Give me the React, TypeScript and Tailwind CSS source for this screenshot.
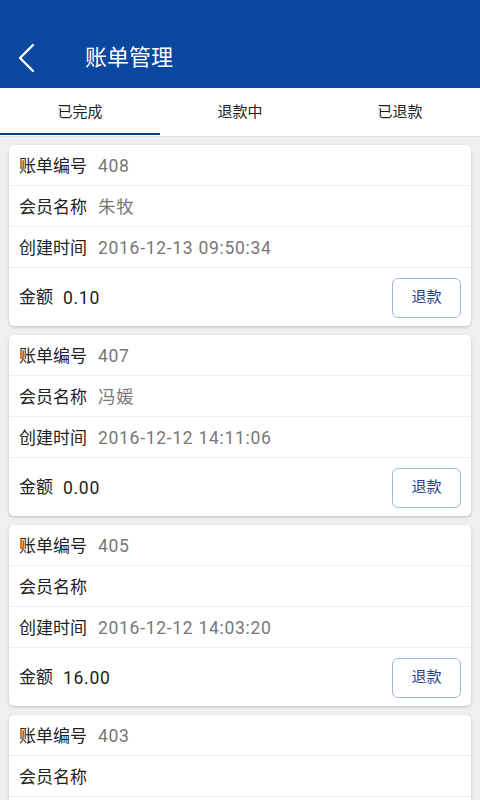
import React, { useState } from 'react';

const font = { fontFamily: '"Roboto", "Noto Sans CJK SC", sans-serif' };

interface Bill {
  id: string;
  member: string;
  created: string;
  amount: string;
}

const bills: Bill[] = [
  { id: '408', member: '朱牧', created: '2016-12-13 09:50:34', amount: '0.10' },
  { id: '407', member: '冯媛', created: '2016-12-12 14:11:06', amount: '0.00' },
  { id: '405', member: '', created: '2016-12-12 14:03:20', amount: '16.00' },
  { id: '403', member: '', created: '2016-12-12 13:58:41', amount: '8.00' },
];

const tabs = ['已完成', '退款中', '已退款'];

function Row({ label, value }: { label: string; value: string }) {
  return (
    <div className="flex-shrink-0 flex items-center h-[41px] pt-[3px] px-[10px] border-b border-[#eeeeee]">
      <span className="text-[17px] text-[#222222]">{label}</span>
      <span className="ml-[11px] text-[17.5px] tracking-[0.7px] text-[#777777]">{value}</span>
    </div>
  );
}

function BillCard({ bill }: { bill: Bill }) {
  return (
    <div className="flex-shrink-0 bg-white rounded-[5px] shadow-[0_1px_3px_rgba(0,0,0,0.2)] flex flex-col">
      <Row label="账单编号" value={bill.id} />
      <Row label="会员名称" value={bill.member} />
      <Row label="创建时间" value={bill.created} />
      <div className="flex items-center justify-between h-[58px] pt-[1px] px-[10px]">
        <div className="flex items-center pt-[1px]">
          <span className="text-[17px] text-[#222222]">金额</span>
          <span className="ml-[10px] text-[17.5px] tracking-[0.7px] text-[#222222]">{bill.amount}</span>
        </div>
        <button className="w-[69px] h-[40px] rounded-[6px] border border-[#a3b6d8] text-[#1e3f8a] text-[15px] bg-white">
          退款
        </button>
      </div>
    </div>
  );
}

export default function App() {
  const [active, setActive] = useState(0);

  return (
    <div className="w-[480px] h-[800px] overflow-hidden bg-[#efefef] flex flex-col" style={font}>
      {/* Header */}
      <header className="flex-shrink-0 h-[88px] bg-[#0a47a1] flex items-end pb-[14px]">
        <button className="w-[54px] h-[32px] flex items-center justify-start pl-[16px]">
          <svg width="20" height="30" viewBox="0 0 20 30" fill="none">
            <path d="M17 2 L4 15 L17 28" stroke="white" strokeWidth="2.4" strokeLinecap="round" strokeLinejoin="round" />
          </svg>
        </button>
        <h1 className="ml-[31px] text-white text-[22px] leading-[32px]">账单管理</h1>
      </header>

      {/* Tabs */}
      <nav className="flex-shrink-0 h-[49px] bg-white grid grid-cols-3 border-b border-[#e2e2e2]">
        {tabs.map((t, i) => (
          <button
            key={t}
            onClick={() => setActive(i)}
            className="relative flex items-center justify-center text-[15px] text-[#222222]"
          >
            {t}
            {active === i && <span className="absolute left-0 right-0 bottom-[1px] h-[2px] bg-[#0a3a8c]" />}
          </button>
        ))}
      </nav>

      {/* List */}
      <div className="flex-1 overflow-hidden px-[9px] pt-[8px] flex flex-col gap-[9px]">
        {bills.map((b) => (
          <BillCard key={b.id} bill={b} />
        ))}
      </div>
    </div>
  );
}
